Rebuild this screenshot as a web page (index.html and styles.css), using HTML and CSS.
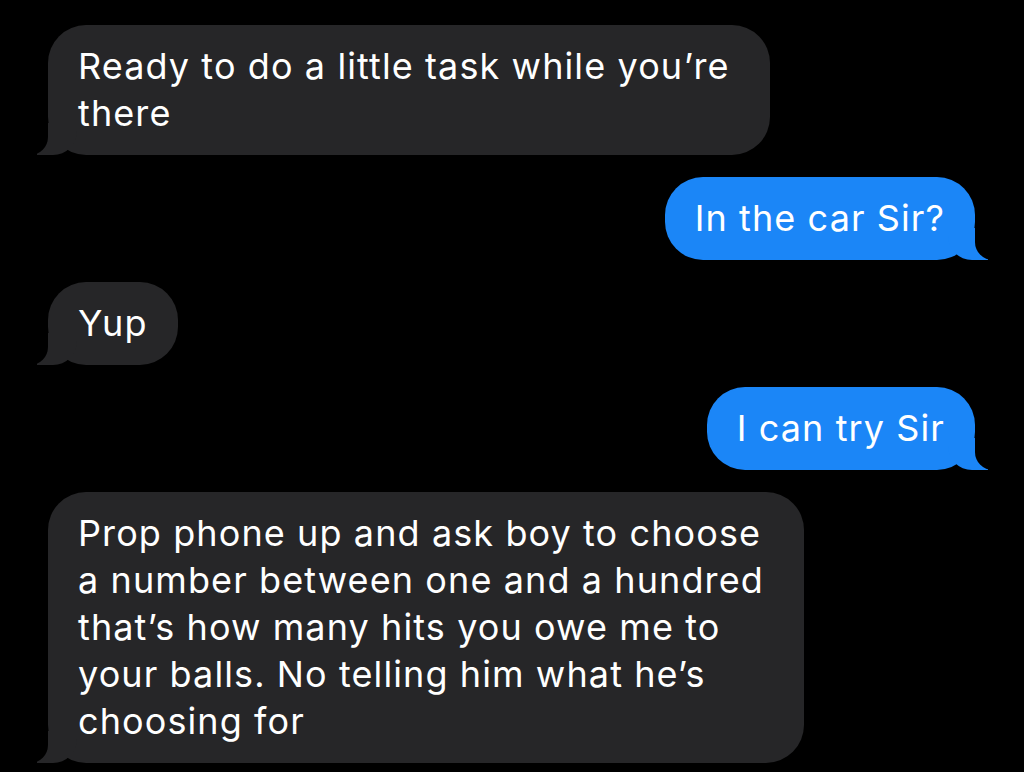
FILE: index.html
```html
<!DOCTYPE html>
<html lang="en">
<head>
    <meta charset="UTF-8">
    <title>Messages</title>
    <link rel="stylesheet" href="styles.css">
</head>
<body>
    <div class="thread">
        <div class="bubble them long">Ready to do a little task while you’re<br>there</div>
        <div class="bubble me">In the car Sir?</div>
        <div class="bubble them">Yup</div>
        <div class="bubble me">I can try Sir</div>
        <div class="bubble them long">Prop phone up and ask boy to choose<br>a number between one and a hundred<br>that’s how many hits you owe me to<br>your balls. No telling him what he’s<br>choosing for</div>
    </div>
</body>
</html>
```

FILE: styles.css
```css
body {
    margin: 0;
    background: #000;
    font-family: 'Inter', 'Liberation Sans', sans-serif;
    color: #fff;
}

.thread {
    display: flex;
    flex-direction: column;
    gap: 22px;
    padding: 25px 49px 0 48px;
}

.bubble {
    position: relative;
    padding: 18px 30px;
    border-radius: 38px;
    font-size: 36px;
    line-height: 47px;
    letter-spacing: 1.1px;
    max-width: 820px;
}

/* wrapped messages keep some room on the right */
.long {
    padding-right: 40px;
}

/* bubbles from the other side */
.them {
    align-self: flex-start;
    background: #262628;
}

.them::before {
    content: "";
    position: absolute;
    bottom: 0;
    left: -11px;
    width: 40px;
    height: 32px;
    background: #262628;
    border-bottom-right-radius: 24px;
}

.them::after {
    content: "";
    position: absolute;
    bottom: 0;
    left: -32px;
    width: 32px;
    height: 34px;
    background: #000;
    border-bottom-right-radius: 18px;
}

/* my bubbles */
.me {
    align-self: flex-end;
    background: #1b86f7;
}

.me::before {
    content: "";
    position: absolute;
    bottom: 0;
    right: -13px;
    width: 40px;
    height: 32px;
    background: #1b86f7;
    border-bottom-left-radius: 24px;
}

.me::after {
    content: "";
    position: absolute;
    bottom: 0;
    right: -32px;
    width: 32px;
    height: 34px;
    background: #000;
    border-bottom-left-radius: 18px;
}
```
